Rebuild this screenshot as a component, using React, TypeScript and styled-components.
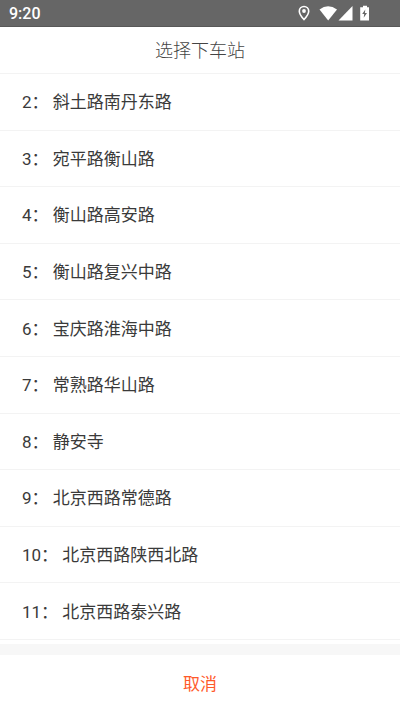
import React from "react";
import styled, { createGlobalStyle } from "styled-components";

const GlobalStyle = createGlobalStyle`
  * { box-sizing: border-box; }
  body { margin: 0; background: #fff; font-family: Roboto, "Noto Sans CJK SC", sans-serif; }
`;

const Screen = styled.div`
  display: flex;
  flex-direction: column;
  min-height: 100vh;
`;

const StatusBar = styled.header`
  display: flex;
  flex: none;
  align-items: center;
  justify-content: space-between;
  height: 27px;
  padding: 0 26px 0 9px;
  border-bottom: 1px solid #585858;
  background: #666;
  color: #fff;
  font-size: 16px;
  font-weight: 500;
`;

const StatusIcons = styled.div`
  display: flex;
  align-items: center;
`;

const Title = styled.h1`
  flex: none;
  margin: 0;
  padding-top: 2px;
  border-bottom: 1px solid #f3f3f3;
  color: #444;
  font-size: 18px;
  font-weight: 300;
  line-height: 44px;
  text-align: center;
`;

const StationList = styled.ul`
  display: flex;
  flex: 1;
  flex-direction: column;
  margin: 0;
  padding: 0 0 4px;
  list-style: none;
`;

const StationItem = styled.li`
  display: flex;
  flex: 1;
  min-height: 48px;
  border-bottom: 1px solid #f3f3f3;
`;

const StationButton = styled.button`
  flex: 1;
  padding: 0 22px 2px;
  border: 0;
  background: none;
  color: #3a3a3a;
  font: inherit;
  font-size: 17px;
  text-align: left;
  white-space: pre;
`;

const CancelButton = styled.button`
  flex: none;
  height: 67px;
  padding: 0 0 2px;
  border: 0;
  border-top: 11px solid #f7f7f7;
  background: #fff;
  color: #ff5a2b;
  font: inherit;
  font-size: 17px;
`;

const stations = [
  [2, "斜土路南丹东路"],
  [3, "宛平路衡山路"],
  [4, "衡山路高安路"],
  [5, "衡山路复兴中路"],
  [6, "宝庆路淮海中路"],
  [7, "常熟路华山路"],
  [8, "静安寺"],
  [9, "北京西路常德路"],
  [10, "北京西路陕西北路"],
  [11, "北京西路泰兴路"],
];

export default function App() {
  return (
    <Screen>
      <GlobalStyle />
      <StatusBar>
        <span>9:20</span>
        <StatusIcons>
          <svg width="76" height="16" viewBox="0 0 76 16" fill="#fff" aria-hidden="true">
            <path
              d="M6 1.500a4.700 4.700 0 0 0-4.700 4.700c0 3.200 4.700 8.300 4.700 8.300s4.700-5.100 4.700-8.300a4.700 4.700 0 0 0-4.700-4.700z"
              fill="none"
              stroke="#fff"
              strokeWidth="1.600"
            />
            <circle cx="6" cy="6" r="1.900" />
            <path d="M21.500 4.500Q30 -2 39 4.500L30.200 15.500z" />
            <path d="M54.500 1V15.500H40.500z" />
            <path d="M63.500 2.200h1.500V.8h4v1.400h2V15.500H62.200V2.200z" />
            <path d="M67.300 4.500L64.200 9h2l-.5 3.700L69 8h-2.100z" fill="#666" />
          </svg>
        </StatusIcons>
      </StatusBar>
      <Title>选择下车站</Title>
      <StationList>
        {stations.map(([number, name]) => (
          <StationItem key={number}>
            <StationButton type="button">{`${number}： ${name}`}</StationButton>
          </StationItem>
        ))}
      </StationList>
      <CancelButton type="button">取消</CancelButton>
    </Screen>
  );
}
